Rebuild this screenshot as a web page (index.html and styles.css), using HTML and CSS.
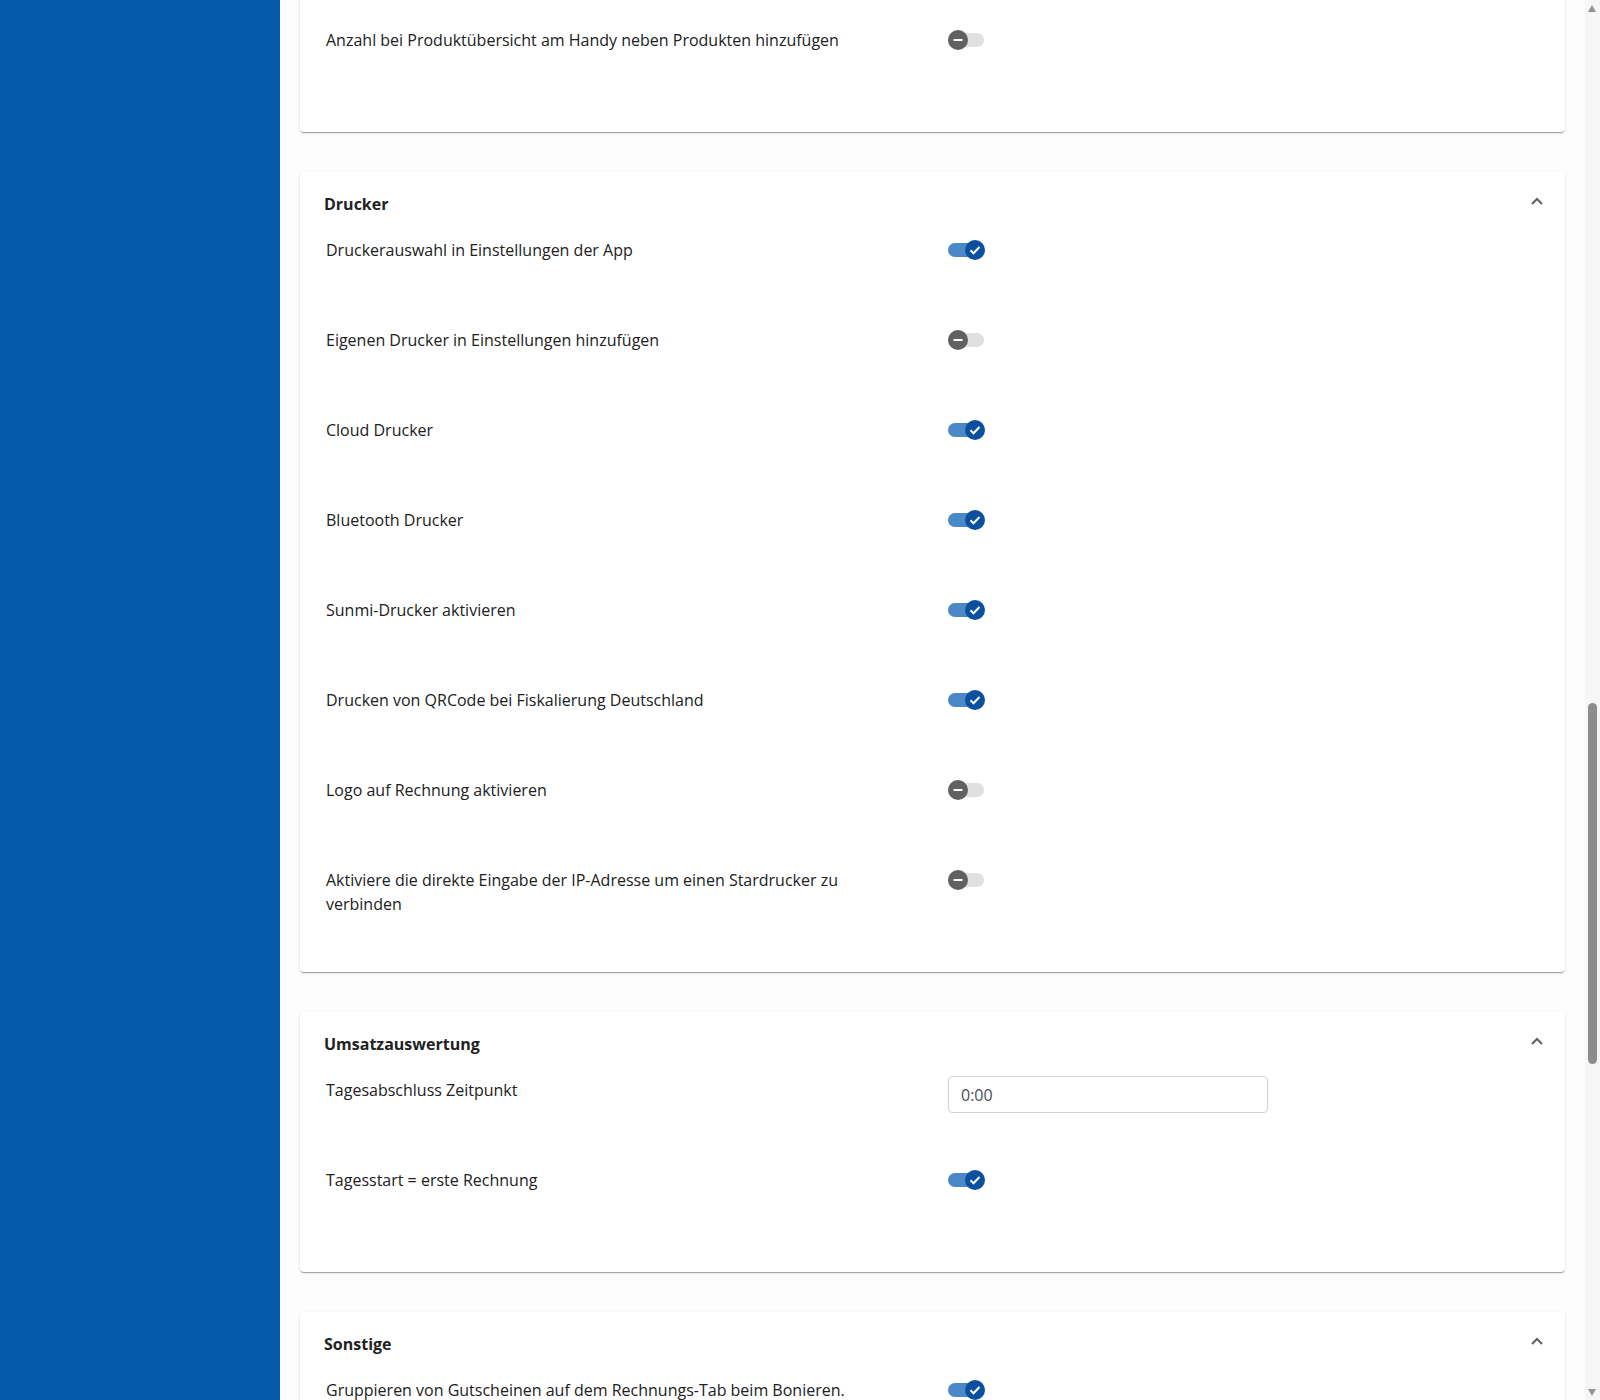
FILE: index.html
```html
<!DOCTYPE html>
<html lang="de">
<head>
    <meta charset="UTF-8">
    <meta name="viewport" content="width=device-width, initial-scale=1.0">
    <title>Einstellungen</title>
    <link rel="stylesheet" href="styles.css">
</head>
<body>
    <div class="layout">
        <aside class="sidebar"></aside>

        <main class="settings" id="settings">
            <section class="card">
                <div class="card-header">
                    <h3>Produkte</h3>
                    <svg class="chevron" width="12" height="8" viewBox="0 0 12 8"><polyline points="1,7 6,2 11,7"/></svg>
                </div>
                <div class="row">
                    <span class="label">Anzahl bei Produktübersicht am Handy neben Produkten hinzufügen</span>
                    <span class="switch"></span>
                </div>
            </section>

            <section class="card" id="drucker">
                <div class="card-header">
                    <h3>Drucker</h3>
                    <svg class="chevron" width="12" height="8" viewBox="0 0 12 8"><polyline points="1,7 6,2 11,7"/></svg>
                </div>
                <div class="row">
                    <span class="label">Druckerauswahl in Einstellungen der App</span>
                    <span class="switch on"></span>
                </div>
                <div class="row">
                    <span class="label">Eigenen Drucker in Einstellungen hinzufügen</span>
                    <span class="switch"></span>
                </div>
                <div class="row">
                    <span class="label">Cloud Drucker</span>
                    <span class="switch on"></span>
                </div>
                <div class="row">
                    <span class="label">Bluetooth Drucker</span>
                    <span class="switch on"></span>
                </div>
                <div class="row">
                    <span class="label">Sunmi-Drucker aktivieren</span>
                    <span class="switch on"></span>
                </div>
                <div class="row">
                    <span class="label">Drucken von QRCode bei Fiskalierung Deutschland</span>
                    <span class="switch on"></span>
                </div>
                <div class="row">
                    <span class="label">Logo auf Rechnung aktivieren</span>
                    <span class="switch"></span>
                </div>
                <div class="row">
                    <span class="label">Aktiviere die direkte Eingabe der IP-Adresse um einen Stardrucker zu verbinden</span>
                    <span class="switch"></span>
                </div>
            </section>

            <section class="card">
                <div class="card-header">
                    <h3>Umsatzauswertung</h3>
                    <svg class="chevron" width="12" height="8" viewBox="0 0 12 8"><polyline points="1,7 6,2 11,7"/></svg>
                </div>
                <div class="row">
                    <span class="label">Tagesabschluss Zeitpunkt</span>
                    <input class="text-input" type="text" value="0:00">
                </div>
                <div class="row">
                    <span class="label">Tagesstart = erste Rechnung</span>
                    <span class="switch on"></span>
                </div>
            </section>

            <section class="card">
                <div class="card-header">
                    <h3>Sonstige</h3>
                    <svg class="chevron" width="12" height="8" viewBox="0 0 12 8"><polyline points="1,7 6,2 11,7"/></svg>
                </div>
                <div class="row">
                    <span class="label">Gruppieren von Gutscheinen auf dem Rechnungs-Tab beim Bonieren.</span>
                    <span class="switch on"></span>
                </div>
            </section>
        </main>

        <div class="scrollbar">
            <span class="arrow up"></span>
            <span class="thumb" style="top: 703px; height: 361px;"></span>
            <span class="arrow down"></span>
        </div>
    </div>

    <script>
        // Drucker-Bereich in Sicht bringen
        document.getElementById('settings').scrollTop = 58;
    </script>
</body>
</html>
```

FILE: styles.css
```css
body {
    margin: 0;
    font-family: "Open Sans", "Noto Sans", sans-serif;
    font-size: 16px;
    line-height: 24px;
    color: #212121;
    background-color: #fdfdfd;
}

.layout {
    display: flex;
    height: 100vh;
}

.sidebar {
    flex: 0 0 280px;
    background-color: #0659ab;
}

.settings {
    flex: 1;
    display: flex;
    flex-direction: column;
    gap: 40px;
    padding: 20px;
    overflow-y: scroll;
    scrollbar-width: none;
}

/* eigene Scrollleiste rechts */
.scrollbar {
    position: relative;
    flex: 0 0 15px;
    background-color: #f6f6f6;
}

.arrow {
    position: absolute;
    left: 3px;
    width: 0;
    height: 0;
    border-left: 4.5px solid transparent;
    border-right: 4.5px solid transparent;
}

.arrow.up {
    top: 5px;
    border-bottom: 7px solid #939393;
}

.arrow.down {
    bottom: 4px;
    border-top: 7px solid #939393;
}

.thumb {
    position: absolute;
    left: 3px;
    width: 9px;
    border-radius: 5px;
    background-color: #8c8c8c;
}

.card {
    flex-shrink: 0;
    background-color: white;
    border-radius: 4px;
    padding: 20px 24px 14px;
    box-shadow: 0 2px 1px -1px rgba(0,0,0,0.2), 0 1px 1px 0 rgba(0,0,0,0.14), 0 1px 3px 0 rgba(0,0,0,0.12);
}

.card-header {
    display: flex;
    justify-content: space-between;
    margin-bottom: 22px;
}

.card-header h3 {
    margin: 0;
    font-size: 16px;
    font-weight: 700;
    line-height: 24px;
    color: #222;
}

.chevron {
    margin-top: 5px;
    margin-right: -2px;
    fill: none;
    stroke: #616161;
    stroke-width: 2;
}

.row {
    display: grid;
    grid-template-columns: 624px 1fr;
    align-items: start;
    min-height: 90px;
}

.label {
    max-width: 550px;
    padding-left: 2px;
}

/* Schalter mit Haken / Strich im Knopf */
.switch {
    position: relative;
    display: block;
    width: 37px;
    height: 20px;
    margin-top: 2px;
}

.switch::before {
    content: "";
    position: absolute;
    left: 0;
    top: 3px;
    width: 36px;
    height: 14px;
    border-radius: 7px;
    background-color: #e0e0e0;
}

.switch::after {
    content: "";
    position: absolute;
    left: 0;
    top: 0;
    width: 20px;
    height: 20px;
    border-radius: 50%;
    background: #616161 url("data:image/svg+xml,%3Csvg xmlns='http://www.w3.org/2000/svg' width='20' height='20'%3E%3Cpath d='M5.5 10h9' stroke='white' stroke-width='2'/%3E%3C/svg%3E") center no-repeat;
}

.switch.on::before {
    width: 32px;
    background-color: #4a88c8;
}

.switch.on::after {
    left: 17px;
    background: #0b4f9f url("data:image/svg+xml,%3Csvg xmlns='http://www.w3.org/2000/svg' width='20' height='20'%3E%3Cpath d='M5.5 10.3l3 3 6-6.3' stroke='white' stroke-width='2' fill='none'/%3E%3C/svg%3E") center no-repeat;
}

.text-input {
    box-sizing: border-box;
    width: 320px;
    height: 37px;
    margin-top: -2px;
    padding: 0 12px;
    border: 1px solid #cdd1d9;
    border-radius: 4px;
    font-family: inherit;
    font-size: 16px;
    color: #495057;
    background-color: white;
}
```
